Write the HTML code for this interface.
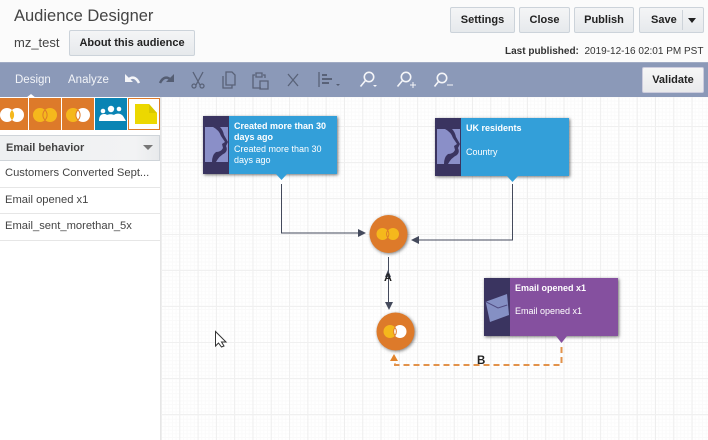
<!DOCTYPE html>
<html><head><meta charset="utf-8"><style>
*{box-sizing:border-box}
html,body{margin:0;padding:0}
body{width:708px;height:440px;overflow:hidden;background:#fbfbfb;font-family:"Liberation Sans",sans-serif;position:relative;color:#333}
.a{position:absolute}
.btn{position:absolute;background:linear-gradient(#f4f5f6,#e6e9ec);border:1px solid #ccd3da;border-radius:2px;font-size:11px;font-weight:bold;color:#222;text-align:center;line-height:24px;height:26px}
.tile{position:absolute;top:98px;height:32px;width:32px;background:#dd7a2a}
.node{position:absolute;width:134px;height:58px;background:#339fd9;box-shadow:1px 1px 3px rgba(0,0,0,.55);color:#fff;font-size:9px;line-height:11px}
.node .ic{position:absolute;left:0;top:0;width:26px;height:58px;background:#3a3460}
.node .t{position:absolute;left:31px;width:100px;white-space:pre-line}
.node b{font-weight:bold}
.li{position:absolute;left:0;width:160px;border-bottom:1px solid #e6e6e6;font-size:11.2px;line-height:25px;padding-left:5px;color:#444;background:#fff;white-space:nowrap}
.canvas{position:absolute;left:161px;top:97px;width:547px;height:343px;background-color:#fff;background-image:linear-gradient(#f0f0f0 1px,transparent 1px),linear-gradient(90deg,#eeeeee 1px,transparent 1px),linear-gradient(#fafafa 1px,transparent 1px),linear-gradient(90deg,#fafafa 1px,transparent 1px);background-size:36px 36px,18.3px 18.3px,3.66px 3.66px,3.66px 3.66px;background-position:0 -7px,0 0,0 0,0 0}
</style></head><body>
<div class="a" style="left:14px;top:7px;font-size:16.5px;line-height:19px;color:#444">Audience Designer</div>
<div class="a" style="left:14px;top:35px;font-size:13px;line-height:16px;color:#444">mz_test</div>
<div class="btn" style="left:69px;top:30px;width:126px">About this audience</div>
<div class="btn" style="left:450px;top:7px;width:65px">Settings</div>
<div class="btn" style="left:519px;top:7px;width:51px">Close</div>
<div class="btn" style="left:574px;top:7px;width:60px">Publish</div>
<div class="btn" style="left:639px;top:7px;width:65px;text-align:left;padding-left:11px">Save</div>
<div class="a" style="left:682px;top:10px;width:1px;height:20px;background:#cdd3d9"></div>
<svg class="a" style="left:687px;top:17px" width="11" height="7"><path d="M1 1h8L5 6z" fill="#222"/></svg>
<div class="a" style="left:505px;top:46px;font-size:10px;line-height:12px;color:#333;white-space:nowrap"><b>Last published:</b>&nbsp; 2019-12-16 02:01 PM PST</div>

<div class="a" style="left:0;top:62px;width:708px;height:36px;background:#8b99b8;border-top:1px solid #a0abc4"></div>
<div class="a" style="left:15px;top:73px;font-size:11.5px;line-height:14px;color:#f2f4f8">Design</div>
<div class="a" style="left:68px;top:73px;font-size:11.5px;line-height:14px;color:#f2f4f8">Analyze</div>
<svg class="a" style="left:0;top:62px" width="708" height="36" fill="none">
<path d="M26 36l5-4 5 4z" fill="#fff"/>
<path d="M125 12v8h8z" fill="#f4f5f8"/><path d="M128 18c4-4 8-3 11 3" stroke="#f4f5f8" stroke-width="2.500"/>
<path d="M174 12v8h-8z" fill="#555e73"/><path d="M171 18c-4-4-8-3-11 3" stroke="#555e73" stroke-width="2.500"/>
<g stroke="#596278" stroke-width="1.300"><path d="M193 10l7 13M203 10l-7 13"/><circle cx="194" cy="24" r="2"/><circle cx="202" cy="24" r="2"/>
<path d="M223 14v12h9v-3M226 10h6l3 3v10h-9z"/>
<path d="M255 13h-2v13h8M263 13h2v3M256 11h6v4h-6zM260 19h8v8h-8z"/>
<path d="M288 12l10 12M298 12l-10 12"/>
<path d="M319 10v15"/><path d="M322 13h5M322 17h10M322 21h7" stroke-width="2"/></g>
<path d="M336 22h4l-2 2z" fill="#555e73"/>
<g stroke="#f4f5f8" stroke-width="1.600">
<circle cx="369" cy="15" r="4.700"/><path d="M365.500 18.500l-5 6"/>
<circle cx="406" cy="15" r="4.700"/><path d="M402.500 18.500l-5 6"/>
<circle cx="442" cy="16" r="4.700"/><path d="M438.500 19.500l-4 5"/>
<path d="M410 23h6M413 20v6M447 23h6" stroke-width="1"/></g>
<path d="M373 23h4l-2 2z" fill="#f4f5f8"/>
</svg>
<div class="btn" style="left:642px;top:67px;width:62px;border-color:#ccd;background:linear-gradient(#f6f6f6,#e9eaec)">Validate</div>

<div class="a" style="left:0;top:97px;width:161px;height:343px;background:#fff;border-right:1px solid #e6e6e6"></div>
<div class="tile" style="left:-4px"></div><div class="tile" style="left:29px"></div><div class="tile" style="left:62px"></div>
<div class="tile" style="left:95px;background:#0a84b4"></div>
<div class="tile" style="left:128px;background:#fff;border:1px solid #dd7a2a"></div>
<svg class="a" style="left:0;top:98px" width="160" height="33">
<circle cx="7" cy="17" r="7" fill="#fff"/><circle cx="17" cy="17" r="7" fill="#fff"/><path d="M12 12a7 7 0 0 1 0 10a7 7 0 0 1 0-10z" fill="#f5b81c"/>
<circle cx="40" cy="17" r="7" fill="#f5b81c"/><circle cx="50" cy="17" r="7" fill="#f5b81c"/><path d="M45 12a7 7 0 0 1 0 10a7 7 0 0 1 0-10z" fill="none" stroke="#dd7a2a"/>
<circle cx="73" cy="17" r="7" fill="#f5b81c"/><circle cx="83" cy="17" r="7" fill="#fff"/><path d="M78 12a7 7 0 0 1 0 10a7 7 0 0 1 0-10z" fill="none" stroke="#dd7a2a"/>
<g fill="#fff"><circle cx="111" cy="11" r="3.200"/><circle cx="103" cy="13" r="2.300"/><circle cx="119" cy="11" r="2.300"/><path d="M99 23c0-5 2-7 5-7 1 0 2 0 3 1 2-1 5-1 7 0 2-2 7-2 9 1l3 5z"/></g>
<path d="M135 6h14l8 9v11h-22z" fill="#ecd800"/><path d="M149 6l8 9h-8z" fill="#d9c800"/>
</svg>
<div class="a" style="left:0;top:135px;width:160px;height:26px;background:linear-gradient(90deg,#eef0f1,#f2f3f4 85%,#e8eaec);border:1px solid #cfd4d9;border-left:0;font-size:11px;font-weight:bold;line-height:24px;padding-left:6px;color:#444">Email behavior</div>
<svg class="a" style="left:143px;top:145px" width="11" height="6"><path d="M0 0h10L5 5z" fill="#777"/></svg>
<div class="li" style="top:161px;height:27px">Customers Converted Sept...</div>
<div class="li" style="top:188px;height:26px">Email opened x1</div>
<div class="li" style="top:214px;height:27px">Email_sent_morethan_5x</div>

<div class="canvas"></div>
<svg class="a" style="left:0;top:0" width="708" height="440" fill="none">
<g stroke="#444a5c" stroke-width="1"><path d="M281.500 184v49H362"/><path d="M512.500 184v56H418"/><path d="M388.500 257v46"/></g>
<g fill="#444a5c"><path d="M366 233l-8-4v8z"/><path d="M411 240l8-4v8z"/><path d="M389 310l-4-8h8z"/><path d="M388 270l-3 7h6z"/></g>
<path d="M561.500 347v18H395v-5" stroke="#e2924a" stroke-width="2" stroke-dasharray="6 4"/>
<path d="M394 354l-4 7h8z" fill="#e2842c"/>
<text x="384" y="281" font-size="11" font-weight="bold" fill="#222" font-family="Liberation Sans">A</text>
<text x="477" y="364" font-size="11.500" font-weight="bold" fill="#222" font-family="Liberation Sans">B</text>
</svg>

<div class="node" style="left:203px;top:116px"><div class="ic"></div><div class="t" style="top:5px;font-weight:bold">Created more than 30
days ago</div><div class="t" style="top:28px">Created more than 30
days ago</div></div>
<div class="node" style="left:435px;top:118px"><div class="ic"></div><div class="t" style="top:5px;font-weight:bold">UK residents</div><div class="t" style="top:29px">Country</div></div>
<div class="node" style="left:484px;top:278px;background:#85509f"><div class="ic"></div><div class="t" style="top:5px;font-weight:bold">Email opened x1</div><div class="t" style="top:28px">Email opened x1</div></div>
<svg class="a" style="left:0;top:0" width="708" height="440">
<path d="M276 174h11l-5.500 6z" fill="#339fd9"/><path d="M507 176h11l-5.500 6z" fill="#339fd9"/><path d="M556 336h11l-5.500 7z" fill="#85509f"/>
<g fill="#8a8fc8"><path d="M205 127H213Q219 130 221 136L225 142L222 144L223 148Q221 152 216 152Q212 155 212 162H205z"/><path d="M220 127H228V162H216Q219 156 225 153Q228 150 226 146L228 142L224 135Q223 130 220 127z"/>
<path d="M437 129H445Q451 132 453 138L457 144L454 146L455 150Q453 154 448 154Q444 157 444 164H437z"/><path d="M452 129H460V164H448Q451 158 457 155Q460 152 458 148L460 144L456 137Q455 132 452 129z"/></g>
<path d="M485.700 301.700L507 294L509 315L490 322z" fill="#8590c4"/><path d="M485.700 301.700L498 308L507.300 305" fill="none" stroke="#4f4a80" stroke-width="1"/>
<g style="filter:drop-shadow(1px 1px 1.500px rgba(0,0,0,.5))"><circle cx="388.500" cy="234" r="19" fill="#dd7a2a"/><circle cx="395.500" cy="331.500" r="19" fill="#dd7a2a"/></g>
<circle cx="382.500" cy="234" r="6" fill="#f5b81c"/><circle cx="393" cy="234" r="6" fill="#f5b81c"/><path d="M387.700 230.500a6 6 0 0 1 0 7a6 6 0 0 1 0-7z" fill="none" stroke="#dd7a2a"/>
<circle cx="390" cy="331.500" r="6.500" fill="#f5b81c"/><circle cx="400" cy="331.500" r="6.500" fill="#fff"/><path d="M395 327.500a6.500 6.500 0 0 1 0 8a6.500 6.500 0 0 1 0-8z" fill="none" stroke="#dd7a2a"/>
<path d="M215.500 331.500V346l3-3 3 4 2.500-1-2.500-4h4.500z" fill="#fff" stroke="#333" stroke-width="1"/>
</svg>
</body></html>
